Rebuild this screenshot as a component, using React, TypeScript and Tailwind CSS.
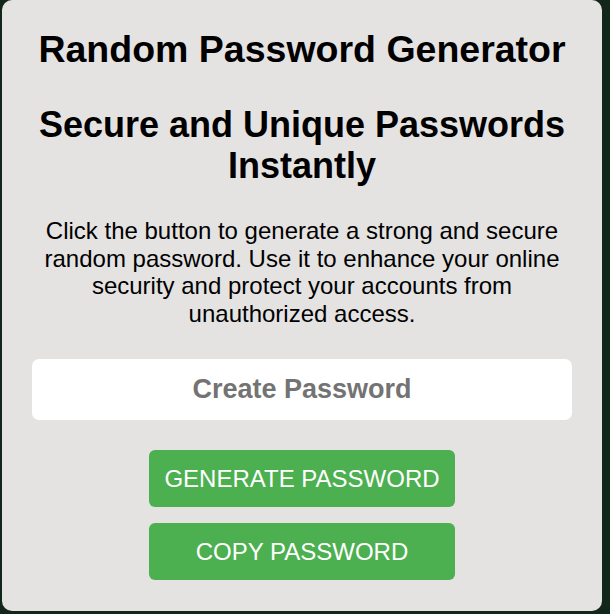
export default function App() {
  return (
    <div className="w-[610px] h-[614px] bg-[#13261a] pl-[2px] overflow-hidden" style={{ fontFamily: '"Liberation Sans", Arial, sans-serif' }}>
      <div className="w-[600px] h-[611px] bg-[#e5e3e2] rounded-[10px] px-[30px] pt-[28px] flex flex-col items-center text-black">
        <h1 className="text-[37.5px] leading-[43px] font-bold text-center whitespace-nowrap">Random Password Generator</h1>
        <h2 className="mt-[33px] text-[36px] leading-[41px] font-bold text-center">Secure and Unique Passwords Instantly</h2>
        <p className="mt-[31px] w-[540px] text-[24px] leading-[27.5px] text-center">
          Click the button to generate a strong and secure random password. Use it to enhance your online security and protect your accounts from unauthorized access.
        </p>
        <div className="mt-[32px] w-[540px] h-[61px] bg-white rounded-[7px] flex items-center justify-center text-[27px] font-bold text-[#737373]">
          Create Password
        </div>
        <button className="mt-[30px] w-[306px] h-[57px] bg-[#4caf50] rounded-[6px] text-white text-[24px] flex items-center justify-center">
          GENERATE PASSWORD
        </button>
        <button className="mt-[16px] w-[306px] h-[57px] bg-[#4caf50] rounded-[6px] text-white text-[24px] flex items-center justify-center">
          COPY PASSWORD
        </button>
      </div>
    </div>
  );
}
